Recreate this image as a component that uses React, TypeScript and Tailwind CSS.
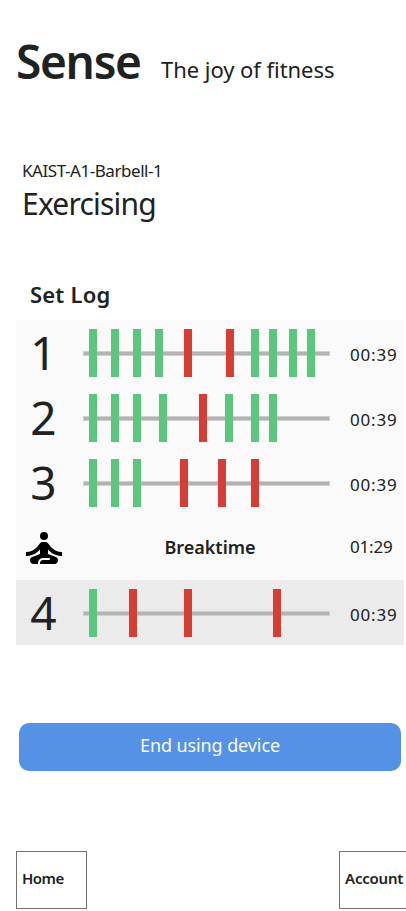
import { MdSelfImprovement } from "react-icons/md";

type Rep = { x: number; good: boolean };

const g = (x: number): Rep => ({ x, good: true });
const r = (x: number): Rep => ({ x, good: false });

const sets: { reps: Rep[]; time: string }[] = [
  { reps: [g(6), g(28), g(50), g(72), r(101), r(143), g(168), g(186), g(206), g(224)], time: "00:39" },
  { reps: [g(6), g(28), g(50), g(76), r(116), g(142), g(168), g(186)], time: "00:39" },
  { reps: [g(6), g(28), g(50), r(97), r(135), r(168)], time: "00:39" },
];

const current = { reps: [g(6), r(46), r(101), r(190)], time: "00:39" };

function SetRow({ n, reps, time, active = false }: { n: number; reps: Rep[]; time: string; active?: boolean }) {
  return (
    <div className={`flex h-[65px] items-center ${active ? "bg-[#ebebeb]" : ""}`}>
      <span className="w-[55px] text-center text-[46px] leading-[65px]">{n}</span>
      <div className="relative ml-3 flex h-12 w-[247px] items-center">
        <div className="mt-px h-[5px] w-full border border-[#d0d0d0] bg-[#b3b3b3]" />
        {reps.map((rep) => (
          <div
            key={rep.x}
            className={`absolute top-0 h-12 w-2 ${rep.good ? "bg-[#5bc67e]" : "bg-[#d63d35]"}`}
            style={{ left: rep.x }}
          />
        ))}
      </div>
      <span className="ml-5 pt-[5px] text-[17px] leading-6 tracking-[0.8px]">{time}</span>
    </div>
  );
}

export default function App() {
  return (
    <div className="flex h-[911px] w-[406px] flex-col overflow-hidden bg-white font-['Noto_Sans',sans-serif] text-[#202121]">
      <header className="flex h-[100px] pl-4 pt-[29px] whitespace-nowrap">
        <h1 className="w-[145px] text-[46px] leading-[64px] font-semibold tracking-[-1.3px]">Sense</h1>
        <p className="pt-6 text-[22px] leading-[32px] tracking-[-0.05px]">The joy of fitness</p>
      </header>

      <section className="mt-[60px] h-[120px] pl-[22px]">
        <p className="text-[17px] leading-[22px] tracking-[-0.45px]">KAIST-A1-Barbell-1</p>
        <p className="text-[30px] leading-[44px] tracking-[-0.8px]">Exercising</p>
      </section>

      <h2 className="h-10 pl-[30px] text-[22px] leading-[29px] font-semibold tracking-[0.2px]">Set Log</h2>

      <section className="ml-4 w-[388px] bg-[#fafafa]">
        {sets.map((s, i) => (
          <SetRow key={i} n={i + 1} reps={s.reps} time={s.time} />
        ))}
        <div className="flex h-[65px] items-center">
          <MdSelfImprovement className="ml-1 size-12 text-black" />
          <span className="ml-[13px] w-[258px] pb-[2px] text-center text-[18px] leading-6 font-semibold">
            Breaktime
          </span>
          <span className="ml-[11px] pb-[2px] text-[17px] leading-6 tracking-[-0.2px]">01:29</span>
        </div>
        <SetRow n={4} reps={current.reps} time={current.time} active />
      </section>

      <button className="mt-[78px] ml-[19px] h-12 w-[382px] rounded-[10px] bg-[#5591e5] pb-[3px] text-[18px] tracking-[-0.1px] text-[#fafcff]">
        End using device
      </button>

      <nav className="mt-20 ml-4 flex w-[394px] justify-between text-[15px] font-semibold">
        <button className="h-[58px] w-[71px] border border-[#707070] pb-[3px] pl-[5px] text-left tracking-[-0.5px]">
          Home
        </button>
        <button className="h-[58px] w-[71px] border border-[#707070] pb-[3px] pl-[5px] text-left tracking-[-0.2px]">
          Account
        </button>
      </nav>
    </div>
  );
}
